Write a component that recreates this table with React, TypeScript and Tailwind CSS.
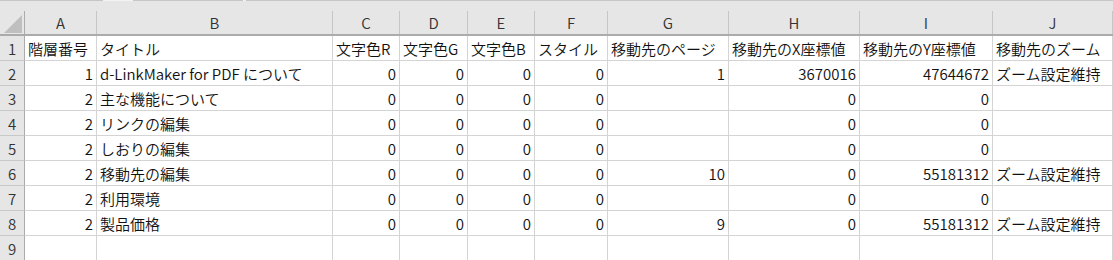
import React from "react";

type Col = { key: string; width: string; align: "left" | "right" };

const cols: Col[] = [
  { key: "A", width: "w-[72px]", align: "right" },
  { key: "B", width: "w-[236px]", align: "left" },
  { key: "C", width: "w-[67px]", align: "right" },
  { key: "D", width: "w-[68px]", align: "right" },
  { key: "E", width: "w-[67px]", align: "right" },
  { key: "F", width: "w-[73px]", align: "right" },
  { key: "G", width: "w-[121px]", align: "right" },
  { key: "H", width: "w-[131px]", align: "right" },
  { key: "I", width: "w-[133px]", align: "right" },
  { key: "J", width: "w-[120px]", align: "left" },
];

const headerRow = [
  "階層番号",
  "タイトル",
  "文字色R",
  "文字色G",
  "文字色B",
  "スタイル",
  "移動先のページ",
  "移動先のX座標値",
  "移動先のY座標値",
  "移動先のズーム",
];

const rows: string[][] = [
  ["1", "d-LinkMaker for PDF について", "0", "0", "0", "0", "1", "3670016", "47644672", "ズーム設定維持"],
  ["2", "主な機能について", "0", "0", "0", "0", "", "0", "0", ""],
  ["2", "リンクの編集", "0", "0", "0", "0", "", "0", "0", ""],
  ["2", "しおりの編集", "0", "0", "0", "0", "", "0", "0", ""],
  ["2", "移動先の編集", "0", "0", "0", "0", "10", "0", "55181312", "ズーム設定維持"],
  ["2", "利用環境", "0", "0", "0", "0", "", "0", "0", ""],
  ["2", "製品価格", "0", "0", "0", "0", "9", "0", "55181312", "ズーム設定維持"],
  ["", "", "", "", "", "", "", "", "", ""],
];

function RowHead({ n }: { n: number }) {
  return (
    <div className="w-[25px] shrink-0 flex items-center justify-center bg-[#e6e6e6] border-r border-r-[#ababab] border-b border-b-[#c8c8c8] text-[#333]">
      {n}
    </div>
  );
}

export default function App() {
  return (
    <div
      className="w-[1113px] h-[260px] overflow-hidden bg-white text-[15px] font-[350] leading-none text-[#111]"
      style={{ fontFamily: '"Noto Sans CJK JP", "Noto Sans", sans-serif' }}
    >
      {/* strip left over from the ribbon above */}
      <div className="flex h-[1px]">
        <div className="w-[103px] bg-[#c6c6c6]" />
        <div className="w-[30px] bg-[#f2f2f2]" />
        <div className="w-[110px] bg-[#c6c6c6]" />
        <div className="w-[3px] bg-[#f2f2f2]" />
        <div className="flex-1 bg-[#c6c6c6]" />
      </div>

      {/* column letters */}
      <div className="flex h-[35px] bg-[#e6e6e6] border-b-2 border-b-[#ababab]">
        <div className="w-[25px] shrink-0 pt-[10px]">
          <div className="h-full border-r border-r-[#ababab] flex items-end justify-end pr-[2px] pb-[1px]">
            <svg width="18" height="18" viewBox="0 0 18 18">
              <polygon points="0,18 18,18 18,0" fill="#bfbfbf" />
            </svg>
          </div>
        </div>
        {cols.map((c) => (
          <div key={c.key} className={`${c.width} shrink-0 pt-[10px]`}>
            <div className="h-full border-r border-r-[#c6c6c6] flex items-center justify-center text-[#333]">
              {c.key}
            </div>
          </div>
        ))}
      </div>

      {/* header row 1 */}
      <div className="flex h-[25px]">
        <RowHead n={1} />
        {cols.map((c, i) => (
          <div
            key={c.key}
            className={`${c.width} shrink-0 flex items-center px-[3px] border-r border-b border-[#d4d4d4] whitespace-nowrap overflow-hidden`}
          >
            {headerRow[i]}
          </div>
        ))}
      </div>

      {rows.map((r, ri) => (
        <div key={ri} className="flex h-[25px]">
          <RowHead n={ri + 2} />
          {cols.map((c, i) => (
            <div
              key={c.key}
              className={`${c.width} shrink-0 flex items-center px-[3px] border-r border-b border-[#d4d4d4] whitespace-nowrap overflow-hidden ${
                c.align === "right" ? "justify-end" : "justify-start"
              }`}
            >
              {r[i]}
            </div>
          ))}
        </div>
      ))}
    </div>
  );
}
